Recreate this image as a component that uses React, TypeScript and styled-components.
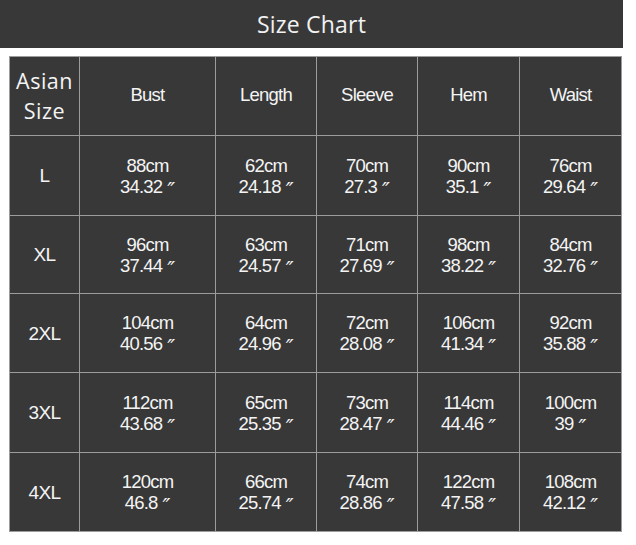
import React from "react";
import styled, { createGlobalStyle } from "styled-components";

const Global = createGlobalStyle`
  html, body { margin: 0; padding: 0; background: #ffffff; }
  body { font-family: "Liberation Sans", Arial, sans-serif; }
`;

const Page = styled.div`
  width: 636px;
  height: 545px;
  background: #ffffff;
  display: flex;
  flex-direction: column;
  gap: 8px;
`;

const TitleBar = styled.div`
  width: 623px;
  height: 48px;
  background: #383838;
  color: #f2f2f2;
  display: flex;
  align-items: center;
  justify-content: center;
  font-family: "Open Sans", "Noto Sans", sans-serif;
  font-size: 23px;
  letter-spacing: 0.2px;
`;

const Grid = styled.div`
  margin-left: 9px;
  width: 613px;
  display: grid;
  grid-template-columns: 69px 135px 100px 100px 101px 101px;
  grid-template-rows: 78px 79px 77px 78px 79px 78px;
  gap: 1px;
  padding: 1px;
  background: #9c9c9c;
  box-sizing: border-box;
`;

const Cell = styled.div`
  background: #383838;
  color: #f4f4f4;
  display: flex;
  flex-direction: column;
  align-items: center;
  justify-content: center;
  font-family: "Liberation Sans", Arial, sans-serif;
  font-size: 18.5px;
  line-height: 21px;
  letter-spacing: -0.8px;
  text-align: center;
`;

const HeadCell = styled(Cell)`
  padding-bottom: 3px;
`;

const AsianCell = styled(Cell)`
  display: block;
  padding-top: 9px;
  font-family: "Open Sans", "Noto Sans", sans-serif;
  font-size: 21.5px;
  line-height: 29.5px;
  letter-spacing: 0.5px;
`;

const SizeCell = styled(Cell)`
  font-size: 19px;
  letter-spacing: -0.6px;
`;

const Inch = styled.span`
  display: inline-block;
  font-family: "DejaVu Sans", sans-serif;
  font-style: italic;
  font-size: 21px;
  line-height: 10px;
  margin-left: 5px;
  letter-spacing: 0;
  transform: translateY(5px);
`;

const heads = ["Bust", "Length", "Sleeve", "Hem", "Waist"];

const rows: [string, [string, string][]][] = [
  ["L", [["88", "34.32"], ["62", "24.18"], ["70", "27.3"], ["90", "35.1"], ["76", "29.64"]]],
  ["XL", [["96", "37.44"], ["63", "24.57"], ["71", "27.69"], ["98", "38.22"], ["84", "32.76"]]],
  ["2XL", [["104", "40.56"], ["64", "24.96"], ["72", "28.08"], ["106", "41.34"], ["92", "35.88"]]],
  ["3XL", [["112", "43.68"], ["65", "25.35"], ["73", "28.47"], ["114", "44.46"], ["100", "39"]]],
  ["4XL", [["120", "46.8"], ["66", "25.74"], ["74", "28.86"], ["122", "47.58"], ["108", "42.12"]]],
];

export default function App() {
  return (
    <Page>
      <Global />
      <TitleBar>Size Chart</TitleBar>
      <Grid>
        <AsianCell>
          Asian
          <br />
          Size
        </AsianCell>
        {heads.map((h) => (
          <HeadCell key={h}>{h}</HeadCell>
        ))}
        {rows.map(([size, vals]) => (
          <React.Fragment key={size}>
            <SizeCell>{size}</SizeCell>
            {vals.map(([cm, inch], i) => (
              <Cell key={i}>
                <span>{cm}cm</span>
                <span>
                  {inch}
                  <Inch>″</Inch>
                </span>
              </Cell>
            ))}
          </React.Fragment>
        ))}
      </Grid>
    </Page>
  );
}
